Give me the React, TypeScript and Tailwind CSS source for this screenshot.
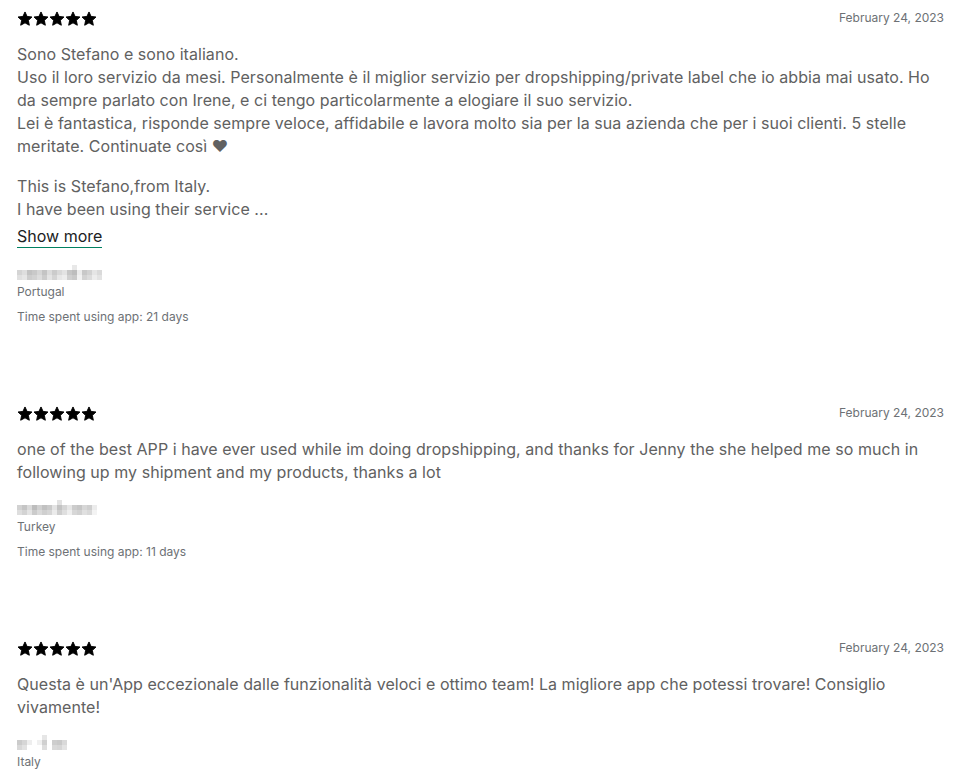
import React from 'react'

type Review = {
  date: string
  paragraphs: string[][]
  showMore?: boolean
  mosaic: string[][]
  country: string
  timeSpent?: string
}

const reviews: Review[] = [
  {
    date: 'February 24, 2023',
    paragraphs: [
      [
        'Sono Stefano e sono italiano.',
        'Uso il loro servizio da mesi. Personalmente è il miglior servizio per dropshipping/private label che io abbia mai usato. Ho da sempre parlato con Irene, e ci tengo particolarmente a elogiare il suo servizio.',
        'Lei è fantastica, risponde sempre veloce, affidabile e lavora molto sia per la sua azienda che per i suoi clienti. 5 stelle meritate. Continuate così ♥',
      ],
      ['This is Stefano,from Italy.', 'I have been using their service ...'],
    ],
    showMore: true,
    mosaic: [
      ['', '', '', '', '', '', '', '', '', '', '', '#e8e8e8', '', '', '', '', ''],
      ['#d4d4d4', '#dedede', '#c2c2c2', '#c9c9c9', '#d6d6d6', '#c4c4c4', '#dcdcdc', '#cbcbcb', '#d9d9d9', '#e3e3e3', '#c6c6c6', '#bdbdbd', '#ececec', '#c8c8c8', '#d2d2d2', '#e5e5e5', '#dadada'],
      ['#e0e0e0', '#e6e6e6', '#cdcdcd', '#d2d2d2', '#dddddd', '#cccccc', '#e4e4e4', '#d4d4d4', '#e7e7e7', '#ededed', '#d0d0d0', '#c9c9c9', '#f2f2f2', '#d3d3d3', '#dcdcdc', '#ededed', '#e3e3e3'],
    ],
    country: 'Portugal',
    timeSpent: 'Time spent using app: 21 days',
  },
  {
    date: 'February 24, 2023',
    paragraphs: [
      [
        'one of the best APP i have ever used while im doing dropshipping, and thanks for Jenny the she helped me so much in following up my shipment and my products, thanks a lot',
      ],
    ],
    mosaic: [
      ['', '', '', '', '', '', '', '', '#e2e2e2', '', '', '', '', '', '', ''],
      ['#d2d2d2', '#c5c5c5', '#dadada', '#bdbdbd', '#d0d0d0', '#c1c1c1', '#cacaca', '#e3e3e3', '#c3c3c3', '#d5d5d5', '#e6e6e6', '#cccccc', '#c6c6c6', '#d7d7d7', '#cfcfcf', '#ececec'],
      ['#dedede', '#d3d3d3', '#e4e4e4', '#cbcbcb', '#dadada', '#cfcfcf', '#d6d6d6', '#ebebeb', '#cecece', '#dfdfdf', '#efefef', '#d7d7d7', '#d1d1d1', '#e0e0e0', '#d9d9d9', '#f3f3f3'],
    ],
    country: 'Turkey',
    timeSpent: 'Time spent using app: 11 days',
  },
  {
    date: 'February 24, 2023',
    paragraphs: [
      [
        "Questa è un'App eccezionale dalle funzionalità veloci e ottimo team! La migliore app che potessi trovare! Consiglio vivamente!",
      ],
    ],
    mosaic: [
      ['', '', '', '', '', '#e6e6e6', '', '', '', ''],
      ['#cbcbcb', '#d6d6d6', '#eeeeee', '', '#f0f0f0', '#d0d0d0', '', '#cdcdcd', '#c9c9c9', '#d9d9d9'],
      ['#d8d8d8', '#e2e2e2', '', '', '', '#dedede', '', '#d9d9d9', '#d6d6d6', '#e3e3e3'],
    ],
    country: 'Italy',
  },
]

function Star() {
  return (
    <svg width="16" height="16" viewBox="0 0 20 20" className="shrink-0">
      <path
        d="M10 1.2l2.6 5.6 6.1.7-4.5 4.2 1.2 6.1L10 14.8l-5.4 3 1.2-6.1L1.3 7.5l6.1-.7z"
        fill="#000"
        stroke="#000"
        strokeWidth="1.2"
        strokeLinejoin="round"
      />
    </svg>
  )
}

function Mosaic({ rows }: { rows: string[][] }) {
  return (
    <div className="flex flex-col">
      {rows.map((row, i) => (
        <div key={i} className="flex">
          {row.map((c, j) => (
            <div key={j} className="h-[5px] w-[5px]" style={{ backgroundColor: c || 'transparent' }} />
          ))}
        </div>
      ))}
    </div>
  )
}

function ReviewCard({ review }: { review: Review }) {
  return (
    <div className="pb-[80px]">
      <div className="flex items-center justify-between">
        <div className="flex">
          {[0, 1, 2, 3, 4].map((i) => (
            <Star key={i} />
          ))}
        </div>
        <span className="-mt-[2px] text-[12px] text-[#6d7175]">{review.date}</span>
      </div>
      <div className="mt-[16px] space-y-[17px] text-[16px] leading-[23px] tracking-[0.05px] text-[#616161]">
        {review.paragraphs.map((p, i) => (
          <div key={i}>
            {p.map((line, j) => (
              <p key={j}>{line}</p>
            ))}
          </div>
        ))}
      </div>
      {review.showMore && (
        <button className="mb-[1px] mt-[4px] border-b border-[#008060] text-[16px] leading-[22px] text-[#202223]">
          Show more
        </button>
      )}
      <div className="mt-[16px]">
        <Mosaic rows={review.mosaic} />
      </div>
      <p className="mt-[3px] text-[12px] leading-[18px] text-[#6d7175]">{review.country}</p>
      {review.timeSpent && (
        <p className="mt-[7px] text-[12px] leading-[18px] text-[#6d7175]">{review.timeSpent}</p>
      )}
    </div>
  )
}

export default function App() {
  return (
    <div
      className="min-h-[780px] bg-white pl-[17px] pr-[19px] pt-[11px]"
      style={{ fontFamily: 'Inter, "Noto Sans", sans-serif' }}
    >
      {reviews.map((r, i) => (
        <ReviewCard key={i} review={r} />
      ))}
    </div>
  )
}
